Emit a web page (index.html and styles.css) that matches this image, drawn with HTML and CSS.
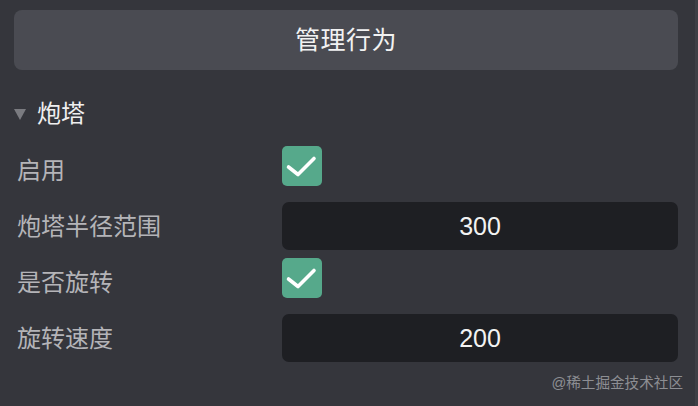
FILE: index.html
```html
<!DOCTYPE html>
<html lang="zh-CN">
<head>
<meta charset="utf-8">
<title>炮塔</title>
<link rel="stylesheet" href="styles.css">
</head>
<body>
<div class="page">
  <div class="panel">
    <div class="manage-btn"><span class="btn-text">管理行为</span></div>
    <div class="section-head">
      <span class="caret"></span>
      <span class="section-title">炮塔</span>
    </div>
    <div class="rows">
      <div class="row">
        <div class="label">启用</div>
        <div class="control">
          <div class="check">
            <svg width="40" height="40" viewBox="0 0 40 40"><path d="M6.5 21 L16 28.5 L32 12.5" fill="none" stroke="#ffffff" stroke-width="3.6" stroke-linecap="round" stroke-linejoin="round"/></svg>
          </div>
        </div>
      </div>
      <div class="row">
        <div class="label">炮塔半径范围</div>
        <div class="control">
          <div class="input">300</div>
        </div>
      </div>
      <div class="row">
        <div class="label">是否旋转</div>
        <div class="control">
          <div class="check">
            <svg width="40" height="40" viewBox="0 0 40 40"><path d="M6.5 21 L16 28.5 L32 12.5" fill="none" stroke="#ffffff" stroke-width="3.6" stroke-linecap="round" stroke-linejoin="round"/></svg>
          </div>
        </div>
      </div>
      <div class="row">
        <div class="label">旋转速度</div>
        <div class="control">
          <div class="input">200</div>
        </div>
      </div>
    </div>
  </div>
  <div class="watermark">@稀土掘金技术社区</div>
</div>
</body>
</html>
```
FILE: styles.css
```css
html, body {
  margin: 0;
  padding: 0;
  background: #35363c;
}
body {
  font-family: "Liberation Sans", "Noto Sans CJK SC", sans-serif;
  width: 698px;
  height: 406px;
  overflow: hidden;
}
.page {
  position: relative;
  width: 698px;
  height: 406px;
  box-sizing: border-box;
  border-right: 3px solid #3e3f45;
}
.panel {
  padding: 10px 17px 0 14px;
  display: flex;
  flex-direction: column;
}
.manage-btn {
  height: 60px;
  border-radius: 8px;
  background: #4a4b52;
  color: #f2f2f2;
  font-size: 25px;
  display: flex;
  align-items: center;
  justify-content: center;
  letter-spacing: 0.5px;
}
.btn-text {
  padding-bottom: 4px;
}
.section-head {
  margin-top: 26px;
  height: 34px;
  margin-bottom: 16px;
  display: flex;
  align-items: center;
}
.caret {
  width: 0;
  height: 0;
  border-left: 6px solid transparent;
  border-right: 6px solid transparent;
  border-top: 11px solid #7a7b80;
  margin-top: 2px;
}
.section-title {
  margin-left: 11px;
  font-size: 24px;
  color: #efeff0;
  padding-bottom: 3px;
}
.rows {
  display: flex;
  flex-direction: column;
  gap: 8px;
}
.row {
  height: 48px;
  display: flex;
}
.label {
  width: 268px;
  padding-left: 3px;
  padding-bottom: 3px;
  box-sizing: border-box;
  font-size: 24px;
  color: #b4b4b8;
  display: flex;
  align-items: center;
}
.control {
  flex: 1;
  display: flex;
  align-items: flex-start;
}
.check {
  width: 40px;
  height: 40px;
  border-radius: 5px;
  background: #56a98b;
}
.check svg {
  display: block;
}
.input {
  flex: 1;
  height: 48px;
  border-radius: 7px;
  background: #1e1f23;
  color: #f2f2f2;
  font-size: 25px;
  display: flex;
  align-items: center;
  justify-content: center;
}
.watermark {
  position: absolute;
  right: 12px;
  bottom: 14px;
  font-size: 14.6px;
  color: #8d8e93;
}
```
